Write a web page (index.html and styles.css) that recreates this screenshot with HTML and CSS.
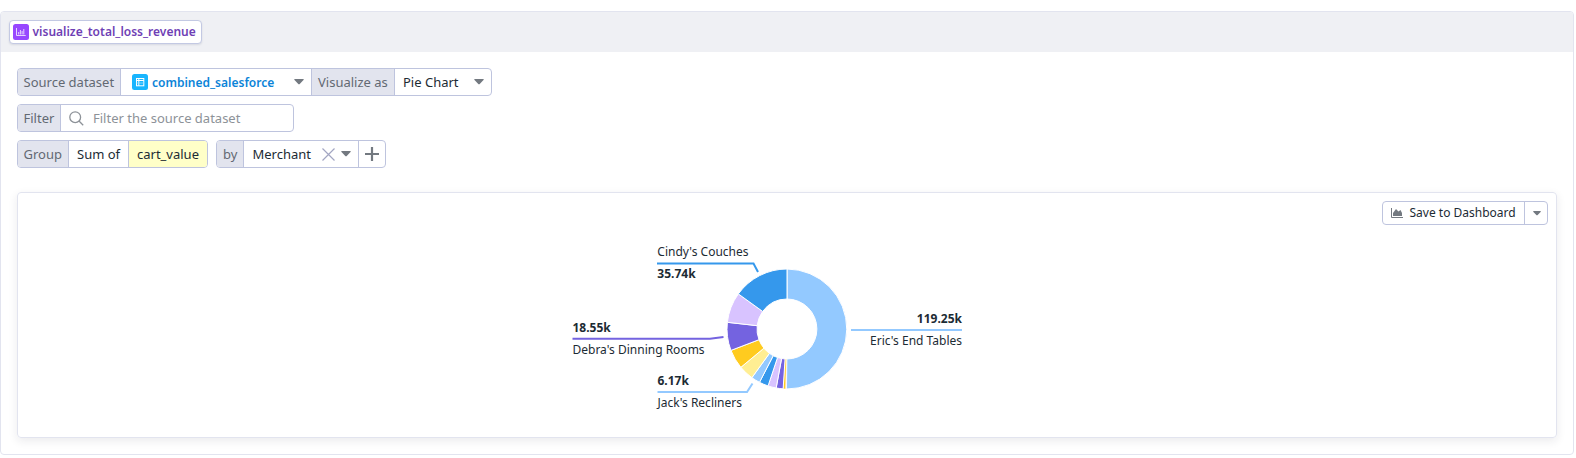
FILE: index.html
```html
<!DOCTYPE html>
<html lang="en">
<head>
<meta charset="utf-8">
<title>visualize_total_loss_revenue</title>
<link rel="stylesheet" href="styles.css">
</head>
<body>
<section class="panel">
  <header class="panel-head">
    <div class="chip">
      <svg class="badge" width="16" height="16" viewBox="0 0 16 16"><rect width="16" height="16" rx="2.500" fill="#9747ff"/><path d="M3.500 4v7.500H12.700" fill="none" stroke="#e6d3ff" stroke-width="1"/><path d="M5.700 8v2.500M7.400 6v4.500M9.100 7v3.500M10.800 5v5.500" stroke="#e6d3ff" stroke-width="1"/></svg>
      <span>visualize_total_loss_revenue</span>
    </div>
  </header>
  <div class="panel-body">
    <div class="row">
      <div class="group">
        <div class="seg label w-source">Source dataset</div>
        <div class="seg dataset">
          <svg class="badge" width="16" height="16" viewBox="0 0 16 16"><rect width="16" height="16" rx="2.500" fill="#19b5fe"/><rect x="4.500" y="4.500" width="7.300" height="7.300" fill="none" stroke="#fff"/><path d="M4.500 6.500h7.300M6.800 4.500v7.300" stroke="#fff"/><path d="M4.500 9h7.300" stroke="#8fdcff" stroke-width=".8"/></svg>
          <span class="dataset-name">combined_salesforce</span>
          <svg class="caret" width="10" height="6" viewBox="0 0 10 6"><path d="M.5 0h9Q10 .5 9.500 1L5.500 5.300H4.500L.5 1Q0 .5.5 0z"/></svg>
        </div>
        <div class="seg label w-visual">Visualize as</div>
        <div class="seg w-pie">Pie Chart
          <svg class="caret" width="10" height="6" viewBox="0 0 10 6"><path d="M.5 0h9Q10 .5 9.500 1L5.500 5.300H4.500L.5 1Q0 .5.5 0z"/></svg>
        </div>
      </div>
    </div>
    <div class="row">
      <div class="group">
        <div class="seg label w-filter">Filter</div>
        <div class="seg search">
          <svg width="15" height="15" viewBox="0 0 15 15" fill="none" stroke="#8d9298" stroke-width="1.300"><circle cx="6.200" cy="6.200" r="5.400"/><path d="M10 10l4.200 4.200"/></svg>
          <span>Filter the source dataset</span>
        </div>
      </div>
    </div>
    <div class="row">
      <div class="group">
        <div class="seg label w-group">Group</div>
        <div class="seg w-sum">Sum of</div>
        <div class="seg field">cart_value</div>
      </div>
      <div class="group">
        <div class="seg label w-by">by</div>
        <div class="seg merchant">
          <span>Merchant</span>
          <svg class="clear" width="13" height="13" viewBox="0 0 13 13"><path d="M.5.5l12 12M12.500.5l-12 12" stroke="#a3a6c2" stroke-width="1.200"/></svg>
          <svg class="caret" width="10" height="6" viewBox="0 0 10 6"><path d="M.5 0h9Q10 .5 9.500 1L5.500 5.300H4.500L.5 1Q0 .5.5 0z"/></svg>
        </div>
        <div class="seg plus"><svg width="14" height="14" viewBox="0 0 14 14"><path d="M7 0v14M0 7h14" stroke="#737980" stroke-width="2.200"/></svg></div>
      </div>
    </div>
    <div class="card">
      <div class="toolbar">
        <div class="group save">
          <div class="seg save-main">
            <svg width="12" height="10" viewBox="0 0 12 10"><path d="M.5 0v9.500H12" fill="none" stroke="#737980"/><path d="M2 8V5l3-4 2.500 2.500L9.500 2 11 5v3z" fill="#737980"/></svg>
            <span>Save to Dashboard</span>
          </div>
          <div class="seg save-more"><svg class="caret" width="8" height="5" viewBox="0 0 10 6"><path d="M.5 0h9Q10 .5 9.500 1L5.500 5.300H4.500L.5 1Q0 .5.5 0z"/></svg></div>
        </div>
      </div>
      <svg class="chart" width="400" height="190" viewBox="570 235 400 190">
        <g id="slices" stroke="#fff" stroke-width="1"></g>
        <g fill="none" stroke-width="2">
          <path d="M657 263.500H753.500L758 272" stroke="#3598ec"/>
          <path d="M572.500 338.700H710L723.500 337" stroke="#7463e0"/>
          <path d="M657.500 392H747L752.500 383.500" stroke="#93c9ff"/>
          <path d="M851 330H962" stroke="#93c9ff"/>
        </g>
        <g class="names">
          <text x="657.300" y="256">Cindy's Couches</text>
          <text x="572.500" y="354">Debra's Dinning Rooms</text>
          <text x="657.500" y="407">Jack's Recliners</text>
          <text x="962" y="345" text-anchor="end">Eric's End Tables</text>
        </g>
        <g class="values">
          <text x="657.300" y="278">35.74k</text>
          <text x="572.500" y="332">18.55k</text>
          <text x="657.500" y="385">6.17k</text>
          <text x="962" y="323" text-anchor="end">119.25k</text>
        </g>
      </svg>
    </div>
  </div>
</section>
<script src="chart.js"></script>
</body>
</html>
```

FILE: styles.css
```css
* { box-sizing: border-box; }
body {
  margin: 0;
  padding-top: 11px;
  background: #fff;
  color: #1c2b34;
  font: 13px/20px "Noto Sans", sans-serif;
}
svg { display: block; flex: none; }
.panel {
  width: 1574px;
  height: 444px;
  border: 1px solid #e2e4ef;
  border-radius: 4px;
  overflow: hidden;
}
.panel-head {
  display: flex;
  align-items: center;
  height: 40px;
  padding-left: 8px;
  background: #eff0f4;
}
.chip {
  display: flex;
  align-items: center;
  gap: 3.5px;
  width: 193px;
  height: 24px;
  padding-left: 3px;
  border: 1px solid #c3c9e3;
  border-radius: 4px;
  background: #fff;
  box-shadow: 0 1px 2px rgba(40, 50, 90, .12);
  color: #6f3fb5;
  font-size: 12px;
  font-weight: 600;
  white-space: nowrap;
}
.panel-body {
  display: flex;
  flex-direction: column;
  gap: 8px;
  padding: 16px;
}
.row { display: flex; gap: 8px; }
.group {
  display: flex;
  height: 28px;
  border: 1px solid #bec4de;
  border-radius: 4px;
  overflow: hidden;
  background: #fff;
}
.seg {
  display: flex;
  align-items: center;
  flex: none;
  padding-left: 8px;
  white-space: nowrap;
}
.seg + .seg { border-left: 1px solid #bec4de; }
.label { padding-left: 5.5px; background: #e2e4ee; color: #626973; }
.caret { fill: #737980; margin-left: auto; }
.w-source { width: 102px; }
.dataset { width: 191px; padding: 0 7px 0 11px; gap: 4px; color: #0b84d8; font-size: 12px; font-weight: 600; }
.dataset-name { padding-top: 2px; }
.w-visual { width: 83px; padding-left: 6px; }
.w-pie { width: 97px; padding-right: 7px; }
.w-filter { width: 42px; }
.search { width: 233px; gap: 9px; color: #8d9298; }
.w-group { width: 50px; }
.w-sum { width: 60px; }
.field { width: 79px; background: #ffffc8; }
.w-by { width: 26px; padding-left: 6px; }
.merchant { width: 115px; padding-left: 8.5px; padding-right: 7px; }
.clear { margin-left: auto; }
.merchant .caret { margin-left: 6px; }
.plus { width: 27px; padding-left: 6px; }
.card {
  height: 246px;
  width: 1540px;
  margin-top: 16px;
  padding: 8px;
  border: 1px solid #e2e4ef;
  border-radius: 4px;
  box-shadow: 0 3px 10px rgba(30, 30, 50, .09);
}
.toolbar { display: flex; justify-content: flex-end; }
.save { height: 24px; font-size: 12px; }
.save-main { width: 141px; gap: 6.5px; }
.save-more { width: 23px; padding-right: 7.5px; }
.chart { margin: 10px 0 0 544px; }
.names, .values { font-size: 12px; fill: #1c2b34; }
.values { font-weight: 700; }
```

FILE: chart.js
```js
const slices = [
  [0, 180.5, "#93c9ff"],
  [180.5, 181.3, "#e3d6f5"],
  [181.3, 183.7, "#ffcb1f"],
  [183.7, 190.4, "#7463e0"],
  [190.4, 198.4, "#d8c3ff"],
  [198.4, 207.3, "#3598ec"],
  [207.3, 215.8, "#93c9ff"],
  [215.8, 230.3, "#ffee93"],
  [230.3, 249.1, "#ffcb1f"],
  [249.1, 276.4, "#7463e0"],
  [276.4, 305.8, "#d8c3ff"],
  [305.8, 360, "#3598ec"]
];
const center = [787, 329];
const outer = 60;
const inner = 30;
const point = (deg, r) => {
  const a = deg * Math.PI / 180;
  return (center[0] + r * Math.sin(a)).toFixed(2) + " " + (center[1] - r * Math.cos(a)).toFixed(2);
};
const layer = document.getElementById("slices");
for (const [from, to, color] of slices) {
  const large = to - from > 180 ? 1 : 0;
  const path = document.createElementNS("http://www.w3.org/2000/svg", "path");
  path.setAttribute("d", `M${point(from, outer)}A${outer} ${outer} 0 ${large} 1 ${point(to, outer)}L${point(to, inner)}A${inner} ${inner} 0 ${large} 0 ${point(from, inner)}Z`);
  path.setAttribute("fill", color);
  if (to - from < 3) path.setAttribute("stroke-width", "0.5");
  layer.appendChild(path);
}
```
